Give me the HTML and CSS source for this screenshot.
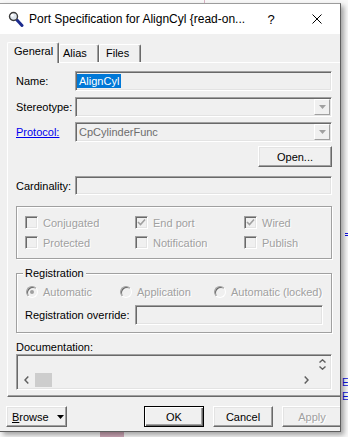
FILE: index.html
```html
<!DOCTYPE html>
<html lang="en-US">
  <head>
    <meta charset="utf-8"/>
    <title>Port Specification for AlignCyl</title>
    <link rel="stylesheet" href="styles.css">
  </head>

  <body>
    <div class="desk">
      <span class="mark pink-line"></span>
      <span class="mark pink-block"></span>
      <span class="mark blue-dash"></span>
      <span class="behind e1">E</span>
      <span class="behind e2">E</span>

      <div class="dialog">
        <div class="titlebar">
          <svg class="app-icon" width="16" height="16" viewBox="0 0 16 16">
            <line x1="8.5" y1="8.5" x2="14" y2="14.5" stroke="#1c2b8f" stroke-width="3" stroke-linecap="round"/>
            <circle cx="5.5" cy="5.5" r="4" fill="#dfe6ee" stroke="#3c3c3c" stroke-width="1.4"/>
            <circle cx="4.3" cy="4.3" r="1.5" fill="#fff"/>
          </svg>
          <span class="title">Port Specification for AlignCyl {read-on...</span>
          <span class="caption-btn help">?</span>
          <span class="caption-btn">
            <svg width="10" height="10" viewBox="0 0 10 10"><path d="M0.5 0.5 L9.5 9.5 M9.5 0.5 L0.5 9.5" stroke="#000" stroke-width="1"/></svg>
          </span>
        </div>

        <div class="content">
          <div class="tabs">
            <div class="tab active">General</div>
            <div class="tab alias">Alias</div>
            <div class="tab files">Files</div>
          </div>

          <div class="panel">
            <div class="field-row">
              <label>Name:</label>
              <div class="edit"><span class="sel">AlignCyl</span></div>
            </div>
            <div class="field-row stereo">
              <label>Stereotype:</label>
              <div class="edit combo">
                <span class="value"></span>
                <span class="drop"><svg width="7" height="4" viewBox="0 0 7 4"><polygon points="0,0 7,0 3.5,4" fill="#a0a0a0"/></svg></span>
              </div>
            </div>
            <div class="field-row proto">
              <a class="link">Protocol:</a>
              <div class="edit combo">
                <span class="value gray">CpCylinderFunc</span>
                <span class="drop"><svg width="7" height="4" viewBox="0 0 7 4"><polygon points="0,0 7,0 3.5,4" fill="#a0a0a0"/></svg></span>
              </div>
            </div>
            <div class="open-row">
              <button class="btn open">Open...</button>
            </div>
            <div class="field-row card">
              <label>Cardinality:</label>
              <div class="edit"></div>
            </div>

            <div class="group options">
              <div class="opt"><span class="cb"></span><span class="dis">Conjugated</span></div>
              <div class="opt"><span class="cb"><svg width="9" height="9" viewBox="0 0 9 9"><path d="M1 4 L3.5 6.5 L8 1.5" stroke="#a0a0a0" stroke-width="1.6" fill="none"/></svg></span><span class="dis">End port</span></div>
              <div class="opt"><span class="cb"><svg width="9" height="9" viewBox="0 0 9 9"><path d="M1 4 L3.5 6.5 L8 1.5" stroke="#a0a0a0" stroke-width="1.6" fill="none"/></svg></span><span class="dis">Wired</span></div>
              <div class="opt"><span class="cb"></span><span class="dis">Protected</span></div>
              <div class="opt"><span class="cb"></span><span class="dis">Notification</span></div>
              <div class="opt"><span class="cb"></span><span class="dis">Publish</span></div>
            </div>

            <div class="group registration">
              <span class="legend">Registration</span>
              <div class="radios">
                <div class="opt"><span class="radio on"></span><span class="dis">Automatic</span></div>
                <div class="opt"><span class="radio"></span><span class="dis">Application</span></div>
                <div class="opt"><span class="radio"></span><span class="dis">Automatic (locked)</span></div>
              </div>
              <div class="override">
                <label>Registration override:</label>
                <div class="edit"></div>
              </div>
            </div>

            <div class="doc-label">Documentation:</div>
            <div class="edit doc">
              <div class="doc-text"></div>
              <div class="vscroll">
                <svg width="7" height="4" viewBox="0 0 7 4"><path d="M0.5 3.5 L3.5 0.8 L6.5 3.5" stroke="#606060" stroke-width="1.4" fill="none"/></svg>
                <svg width="7" height="4" viewBox="0 0 7 4"><path d="M0.5 0.5 L3.5 3.2 L6.5 0.5" stroke="#606060" stroke-width="1.4" fill="none"/></svg>
              </div>
              <div class="hscroll">
                <span class="arrow"><svg width="5" height="8" viewBox="0 0 5 8"><path d="M4.3 0.6 L1 4 L4.3 7.4" stroke="#606060" stroke-width="1.5" fill="none"/></svg></span>
                <span class="thumb"></span>
                <span class="track"></span>
                <span class="arrow"><svg width="5" height="8" viewBox="0 0 5 8"><path d="M0.7 0.6 L4 4 L0.7 7.4" stroke="#606060" stroke-width="1.5" fill="none"/></svg></span>
              </div>
              <div class="corner"></div>
            </div>
          </div>
        </div>

        <div class="buttons">
          <button class="btn browse"><span><u>B</u>rowse</span><svg width="7" height="4" viewBox="0 0 7 4"><polygon points="0,0 7,0 3.5,4" fill="#000"/></svg></button>
          <button class="btn default ok">OK</button>
          <button class="btn cancel">Cancel</button>
          <button class="btn apply">Apply</button>
        </div>
      </div>
    </div>
  </body>
</html>
```

FILE: styles.css
```css
* {
  box-sizing: border-box;
}

body {
  margin: 0;
  background-color: #fff;
  color: #000;
  font: 11px "Liberation Sans", Arial, sans-serif;
}

.desk {
  position: relative;
  width: 348px;
  height: 437px;
  overflow: hidden;
  background-color: #f8f8f8;
}

/* bits of the window behind the dialog */
.mark {
  position: absolute;
}

.pink-line {
  left: 204px;
  top: 0;
  width: 1px;
  height: 4px;
  background-color: #d9b3c3;
}

.pink-block {
  left: 100px;
  top: 426px;
  width: 24px;
  height: 11px;
  background-color: #cfa8b8;
}

.blue-dash {
  left: 345px;
  top: 233px;
  width: 3px;
  height: 3px;
  border-top: 1px solid #1010e0;
  border-bottom: 1px solid #1010e0;
}

.behind {
  position: absolute;
  color: #1010e0;
  font-size: 10px;
  line-height: 12px;
}

.e1 { left: 342px; top: 377px; }
.e2 { left: 342px; top: 391px; }

/* dialog window */
.dialog {
  position: absolute;
  left: 0;
  top: 3px;
  width: 341px;
  height: 429px;
  background-color: #f0f0f0;
  border-top: 1px solid #9c9c9c;
  border-right: 1px solid #5f5f5f;
  border-bottom: 1px solid #5f5f5f;
  box-shadow: 3px 3px 5px rgba(0, 0, 0, 0.35);
  overflow: hidden;
}

.titlebar {
  display: flex;
  align-items: center;
  height: 30px;
  padding-left: 8px;
  background-color: #fff;
}

.app-icon {
  flex-shrink: 0;
}

.title {
  flex: 1;
  margin-left: 5px;
  font-size: 12px;
  white-space: nowrap;
}

.caption-btn {
  display: flex;
  align-items: center;
  justify-content: center;
  width: 46px;
  height: 30px;
  flex-shrink: 0;
  font-size: 13px;
}

.content {
  padding: 8px 0 0 7px;
}

.tabs {
  display: flex;
  align-items: flex-end;
  height: 20px;
}

.tab {
  height: 18px;
  padding-left: 5px;
  line-height: 16px;
  border: 1px solid;
  border-color: #fff #696969 transparent #fff;
  border-bottom: none;
  box-shadow: inset -1px 0 #a0a0a0;
  border-radius: 2px 2px 0 0;
}

.tab.active {
  position: relative;
  z-index: 1;
  width: 52px;
  height: 21px;
  margin-bottom: -1px;
  padding-left: 6px;
  line-height: 17px;
  background-color: #f0f0f0;
}

.tab.alias { width: 40px; padding-left: 3px; }
.tab.files { width: 42px; padding-left: 6px; }

.panel {
  width: 333px;
  height: 335px;
  padding: 8px 8px 0 8px;
  border-top: 1px solid #fff;
  border-left: 1px solid #fff;
  border-bottom: 1px solid #696969;
  box-shadow: inset 0 -1px #a0a0a0;
}

.field-row {
  display: flex;
  align-items: center;
}

.field-row label,
.field-row .link {
  width: 59px;
  flex-shrink: 0;
}

.field-row .edit {
  flex: 1;
}

.stereo { margin-top: 6px; }
.proto { margin-top: 5px; }
.card { margin-top: 9px; }
.card .edit { height: 19px; }

.link {
  color: #0000ee;
  text-decoration: underline;
}

.edit {
  position: relative;
  height: 20px;
  background-color: #f0f0f0;
  border: 1px solid;
  border-color: #a0a0a0 #fff #fff #a0a0a0;
  box-shadow: inset 1px 1px #696969, inset -1px -1px #e3e3e3;
  padding: 2px 1px 0 1px;
}

.sel {
  display: inline-block;
  padding: 0 2px;
  line-height: 14px;
  background-color: #0078d7;
  color: #fff;
}

.combo {
  display: flex;
  padding: 1px;
}

.combo .value {
  flex: 1;
  padding-left: 2px;
  line-height: 16px;
}

.combo .value.gray {
  color: #6d6d6d;
}

.drop {
  display: flex;
  align-items: center;
  justify-content: center;
  width: 16px;
  height: 16px;
  background-color: #f0f0f0;
  border: 1px solid;
  border-color: #fff #a0a0a0 #a0a0a0 #fff;
}

.open-row {
  display: flex;
  justify-content: flex-end;
  margin-top: 4px;
}

.btn {
  height: 21px;
  padding: 0;
  font: inherit;
  color: #000;
  background-color: #f0f0f0;
  border: 1px solid;
  border-color: #fff #696969 #696969 #fff;
  box-shadow: inset -1px -1px #a0a0a0, inset 1px 1px #e3e3e3;
}

.open {
  width: 74px;
}

/* etched group boxes */
.group {
  border: 1px solid #a0a0a0;
  box-shadow: inset 1px 1px #fff, 1px 1px #fff;
}

.options {
  margin-top: 11px;
  height: 53px;
  padding: 9px 0 0 8px;
  display: grid;
  grid-template-columns: 110px 109px 1fr;
  grid-auto-rows: 13px;
  row-gap: 7px;
}

.opt {
  display: flex;
  align-items: center;
  gap: 5px;
  white-space: nowrap;
}

.dis {
  color: #a0a0a0;
  text-shadow: 1px 1px #fff;
}

.cb {
  display: flex;
  align-items: center;
  justify-content: center;
  width: 13px;
  height: 13px;
  flex-shrink: 0;
  background-color: #f0f0f0;
  border: 1px solid;
  border-color: #a0a0a0 #fff #fff #a0a0a0;
  box-shadow: inset 1px 1px #696969, inset -1px -1px #e3e3e3;
}

.registration {
  position: relative;
  margin-top: 14px;
  height: 60px;
  padding: 11px 8px 0 8px;
}

.legend {
  position: absolute;
  left: 6px;
  top: -8px;
  padding: 0 2px;
  line-height: 14px;
  background-color: #f0f0f0;
}

.radios {
  display: grid;
  grid-template-columns: 94px 94px 1fr;
  height: 14px;
}

.radios .opt {
  padding-left: 1px;
}

.radio {
  position: relative;
  width: 12px;
  height: 12px;
  flex-shrink: 0;
  border-radius: 50%;
  background-color: #f0f0f0;
  border: 1px solid;
  border-color: #a0a0a0 #fff #fff #a0a0a0;
  box-shadow: inset 1px 1px #696969;
}

.radio.on::after {
  content: "";
  position: absolute;
  left: 3px;
  top: 3px;
  width: 4px;
  height: 4px;
  border-radius: 50%;
  background-color: #a0a0a0;
}

.override {
  display: flex;
  align-items: center;
  margin-top: 6px;
}

.override label {
  width: 110px;
  flex-shrink: 0;
  white-space: nowrap;
}

.override .edit {
  width: 188px;
}

.doc-label {
  margin-top: 8px;
  height: 13px;
  line-height: 13px;
}

.doc {
  height: 36px;
  padding: 1px;
  display: grid;
  grid-template-columns: 1fr 16px;
  grid-template-rows: 16px 16px;
}

.vscroll {
  display: flex;
  flex-direction: column;
  align-items: center;
  justify-content: center;
  gap: 3px;
}

.hscroll {
  display: flex;
  align-items: center;
}

.arrow {
  display: flex;
  align-items: center;
  justify-content: center;
  width: 16px;
  height: 16px;
}

.thumb {
  width: 17px;
  height: 14px;
  margin-left: 1px;
  background-color: #cdcdcd;
}

.track {
  flex: 1;
}

/* bottom button row */
.buttons {
  display: flex;
  height: 34px;
  padding: 9px 0 0 6px;
}

.buttons .btn {
  flex-shrink: 0;
}

.browse {
  display: flex;
  align-items: center;
  gap: 8px;
  width: 61px;
  padding-left: 5px;
}

.ok {
  width: 60px;
  margin-left: 77px;
}

.btn.default {
  border-color: #000;
  box-shadow: inset 1px 1px #fff, inset -1px -1px #696969, inset -2px -2px #a0a0a0;
}

.cancel {
  width: 60px;
  margin-left: 9px;
}

.apply {
  width: 60px;
  margin-left: 9px;
  color: #a0a0a0;
  text-shadow: 1px 1px #fff;
}
```
